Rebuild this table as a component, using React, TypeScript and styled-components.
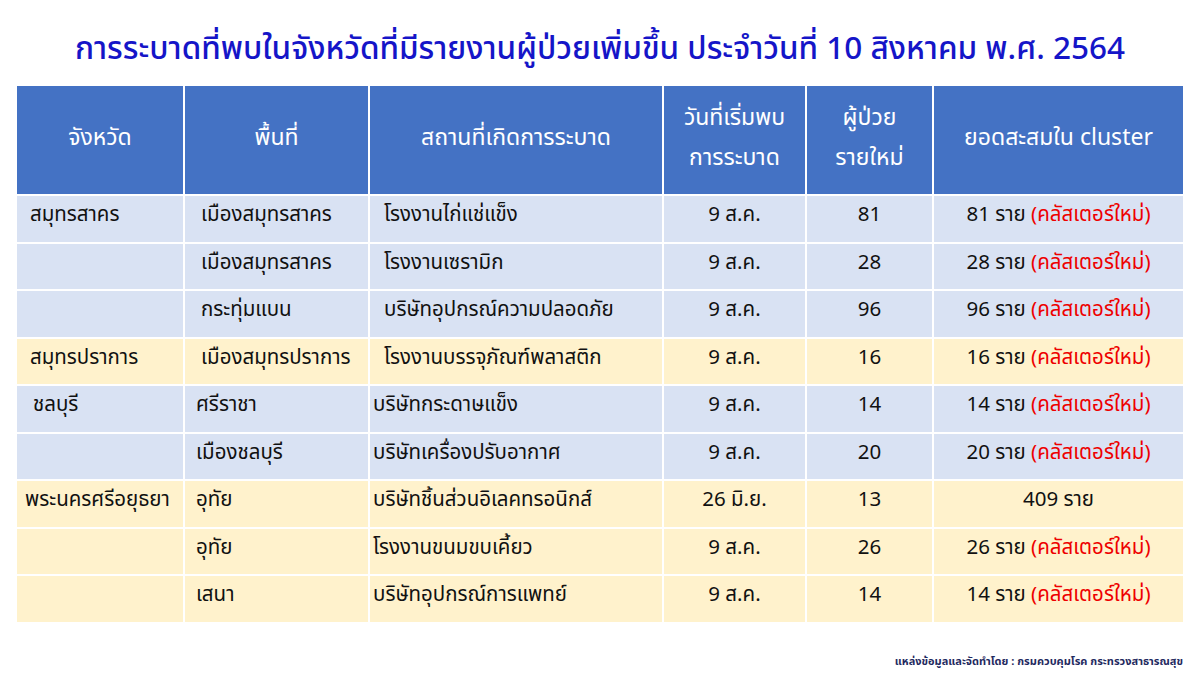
import styled, { createGlobalStyle } from 'styled-components';

const GlobalStyle = createGlobalStyle`
    html, body {
        margin: 0;
        padding: 0;
        background: #ffffff;
    }
    body {
        font-family: "Noto Sans Thai", "Noto Sans", "DejaVu Sans", sans-serif;
    }
`;

const Page = styled.div`
    width: 1200px;
    height: 675px;
    box-sizing: border-box;
    padding: 28px 15px 0 15px;
    display: flex;
    flex-direction: column;
`;

const Title = styled.h1`
    margin: 0 0 12px 0;
    text-align: center;
    font-size: 31.5px;
    font-weight: 500;
    line-height: 44px;
    color: #1515c8;
    white-space: nowrap;
`;

const Table = styled.table`
    width: 1170px;
    border-collapse: separate;
    border-spacing: 2px;
    table-layout: fixed;
`;

const HeadCell = styled.th`
    box-sizing: border-box;
    background: #4472c4;
    color: #ffffff;
    font-size: 23px;
    font-weight: 400;
    line-height: 40px;
    height: 108px;
    text-align: center;
    vertical-align: middle;
    padding: 0 0 4px 0;
    white-space: nowrap;
`;

// each row is either the blue or the yellow band
const Row = styled.tr<{ $tone: 'blue' | 'yellow' }>`
    background: ${(p) => (p.$tone === 'blue' ? '#d9e2f3' : '#fff2cc')};
`;

const Cell = styled.td<{ $center?: boolean; $indent?: number }>`
    box-sizing: border-box;
    height: 45.5px;
    font-size: 20.5px;
    line-height: 26px;
    color: #111111;
    vertical-align: middle;
    padding: 0 4px 7px ${(p) => (p.$center ? 4 : p.$indent ?? 10)}px;
    text-align: ${(p) => (p.$center ? 'center' : 'left')};
    white-space: nowrap;
    overflow: hidden;
`;

const NewCluster = styled.span`
    color: #ee0000;
`;

const Footer = styled.div`
    margin-top: auto;
    margin-bottom: 6px;
    text-align: right;
    padding-right: 2px;
    font-size: 11px;
    line-height: 14px;
    font-weight: 700;
    color: #1f2a60;
`;

type Outbreak = {
    province: string;
    area: string;
    place: string;
    date: string;
    cases: number;
    total: number;
    isNew: boolean;
    tone: 'blue' | 'yellow';
    indent: [number, number, number];
};

const rows: Outbreak[] = [
    { province: 'สมุทรสาคร', area: 'เมืองสมุทรสาคร', place: 'โรงงานไก่แช่แข็ง', date: '9 ส.ค.', cases: 81, total: 81, isNew: true, tone: 'blue', indent: [13, 16, 14] },
    { province: '', area: 'เมืองสมุทรสาคร', place: 'โรงงานเซรามิก', date: '9 ส.ค.', cases: 28, total: 28, isNew: true, tone: 'blue', indent: [13, 16, 14] },
    { province: '', area: 'กระทุ่มแบน', place: 'บริษัทอุปกรณ์ความปลอดภัย', date: '9 ส.ค.', cases: 96, total: 96, isNew: true, tone: 'blue', indent: [13, 16, 14] },
    { province: 'สมุทรปราการ', area: 'เมืองสมุทรปราการ', place: 'โรงงานบรรจุภัณฑ์พลาสติก', date: '9 ส.ค.', cases: 16, total: 16, isNew: true, tone: 'yellow', indent: [13, 16, 14] },
    { province: 'ชลบุรี', area: 'ศรีราชา', place: 'บริษัทกระดาษแข็ง', date: '9 ส.ค.', cases: 14, total: 14, isNew: true, tone: 'blue', indent: [16, 11, 3] },
    { province: '', area: 'เมืองชลบุรี', place: 'บริษัทเครื่องปรับอากาศ', date: '9 ส.ค.', cases: 20, total: 20, isNew: true, tone: 'blue', indent: [16, 11, 3] },
    { province: 'พระนครศรีอยุธยา', area: 'อุทัย', place: 'บริษัทชิ้นส่วนอิเลคทรอนิกส์', date: '26 มิ.ย.', cases: 13, total: 409, isNew: false, tone: 'yellow', indent: [8, 11, 3] },
    { province: '', area: 'อุทัย', place: 'โรงงานขนมขบเคี้ยว', date: '9 ส.ค.', cases: 26, total: 26, isNew: true, tone: 'yellow', indent: [8, 11, 3] },
    { province: '', area: 'เสนา', place: 'บริษัทอุปกรณ์การแพทย์', date: '9 ส.ค.', cases: 14, total: 14, isNew: true, tone: 'yellow', indent: [8, 11, 3] },
];

const widths = [166, 183, 292, 141, 125, 249];

function App() {
    return (
        <>
            <GlobalStyle />
            <Page>
                <Title>การระบาดที่พบในจังหวัดที่มีรายงานผู้ป่วยเพิ่มขึ้น ประจำวันที่ 10 สิงหาคม พ.ศ. 2564</Title>
                <Table>
                    <colgroup>
                        {widths.map((w, i) => (
                            <col key={i} style={{ width: w }} />
                        ))}
                    </colgroup>
                    <thead>
                        <tr>
                            <HeadCell>จังหวัด</HeadCell>
                            <HeadCell>พื้นที่</HeadCell>
                            <HeadCell>สถานที่เกิดการระบาด</HeadCell>
                            <HeadCell>
                                วันที่เริ่มพบ
                                <br />
                                การระบาด
                            </HeadCell>
                            <HeadCell>
                                ผู้ป่วย
                                <br />
                                รายใหม่
                            </HeadCell>
                            <HeadCell>ยอดสะสมใน cluster</HeadCell>
                        </tr>
                    </thead>
                    <tbody>
                        {rows.map((r, i) => (
                            <Row key={i} $tone={r.tone}>
                                <Cell $indent={r.indent[0]}>{r.province}</Cell>
                                <Cell $indent={r.indent[1]}>{r.area}</Cell>
                                <Cell $indent={r.indent[2]}>{r.place}</Cell>
                                <Cell $center>{r.date}</Cell>
                                <Cell $center>{r.cases}</Cell>
                                <Cell $center>
                                    {r.total} ราย{' '}
                                    {r.isNew && <NewCluster>(คลัสเตอร์ใหม่)</NewCluster>}
                                </Cell>
                            </Row>
                        ))}
                    </tbody>
                </Table>
                <Footer>แหล่งข้อมูลและจัดทำโดย : กรมควบคุมโรค กระทรวงสาธารณสุข</Footer>
            </Page>
        </>
    );
}

export default App;
